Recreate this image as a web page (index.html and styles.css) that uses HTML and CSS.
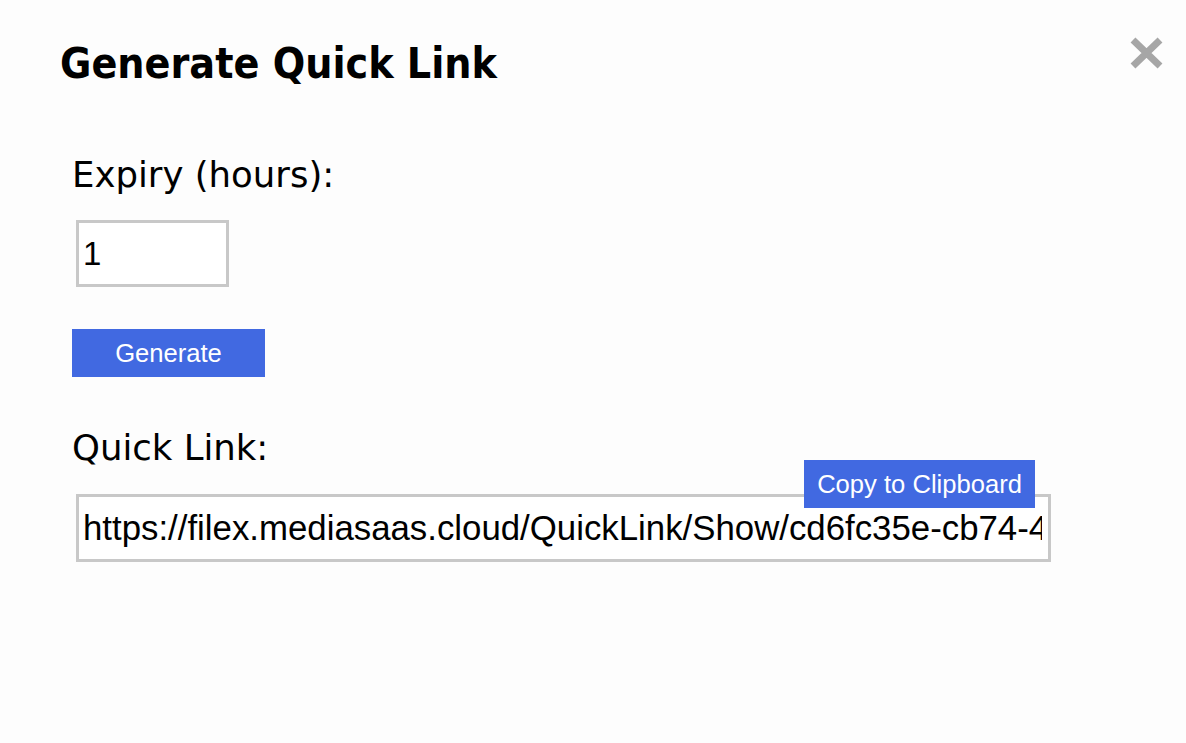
FILE: index.html
```html
<!DOCTYPE html>
<html lang="en">
<head>
  <meta charset="UTF-8">
  <title>Generate Quick Link</title>
  <meta name="viewport" content="width=device-width, initial-scale=1.0">
  <link rel="stylesheet" href="styles.css">
</head>
<body>

  <div class="dialog">
    <header class="dialog-header">
      <h1>Generate Quick Link</h1>
      <button class="close" aria-label="Close">
        <svg width="35" height="34" viewBox="0 0 35 34">
          <path d="M4 4 L31 30 M31 4 L4 30" stroke="#a6a6a6" stroke-width="7" fill="none"/>
        </svg>
      </button>
    </header>

    <div class="form">
      <label class="field-label" for="expiry">Expiry (hours):</label>
      <input class="expiry" id="expiry" type="text" value="1">

      <button class="btn generate">Generate</button>

      <label class="field-label link-label" for="link">Quick Link:</label>
      <div class="link-wrap">
        <input class="link" id="link" type="text" readonly value="https://filex.mediasaas.cloud/QuickLink/Show/cd6fc35e-cb74-4e1a-9b2f-7d3c5a8e0f41">
        <button class="btn copy">Copy to Clipboard</button>
      </div>
    </div>
  </div>

</body>
</html>
```

FILE: styles.css
```css
* {
  box-sizing: border-box;
}

body {
  margin: 0;
  padding: 0;
  background: #fdfdfd;
  color: #000;
  font-family: 'DejaVu Sans', Verdana, sans-serif;
}

.dialog {
  padding-left: 60px;
}

.dialog-header {
  display: flex;
  justify-content: space-between;
  align-items: flex-start;
  padding: 39px 22px 0 0;
}

.dialog-header h1 {
  margin: 0;
  font-family: 'DejaVu Sans Condensed', 'DejaVu Sans', sans-serif;
  font-weight: bold;
  font-size: 42.5px;
  line-height: 50px;
}

.close {
  background: none;
  border: none;
  padding: 0;
  margin-top: -3px;
  width: 35px;
  height: 34px;
  cursor: pointer;
}

.close svg {
  display: block;
}

.form {
  padding: 65px 0 0 12px;
}

.field-label {
  display: block;
  font-size: 35.5px;
  line-height: 42px;
}

.expiry,
.link {
  display: block;
  margin-left: 4px;
  border: 3px solid #c8c8c8;
  background: #fff;
  padding: 0 4px;
  font-family: 'Liberation Sans', Arial, sans-serif;
  color: #000;
  outline: none;
}

.expiry {
  margin-top: 24px;
  width: 153px;
  height: 67px;
  font-size: 33px;
}

.btn {
  background: #4169e1;
  color: #fff;
  border: none;
  font-family: 'Liberation Sans', Arial, sans-serif;
  font-size: 25.6px;
  height: 48px;
  cursor: pointer;
}

.generate {
  display: block;
  margin-top: 42px;
  width: 193px;
}

.link-label {
  margin-top: 50px;
}

.link-wrap {
  position: relative;
  margin-top: 25px;
  width: 979px;
}

.link {
  width: 975px;
  height: 68px;
  padding-right: 6px;
  font-size: 34.8px;
}

.copy {
  position: absolute;
  top: -34px;
  right: 16px;
  padding: 0 13px;
}
```
